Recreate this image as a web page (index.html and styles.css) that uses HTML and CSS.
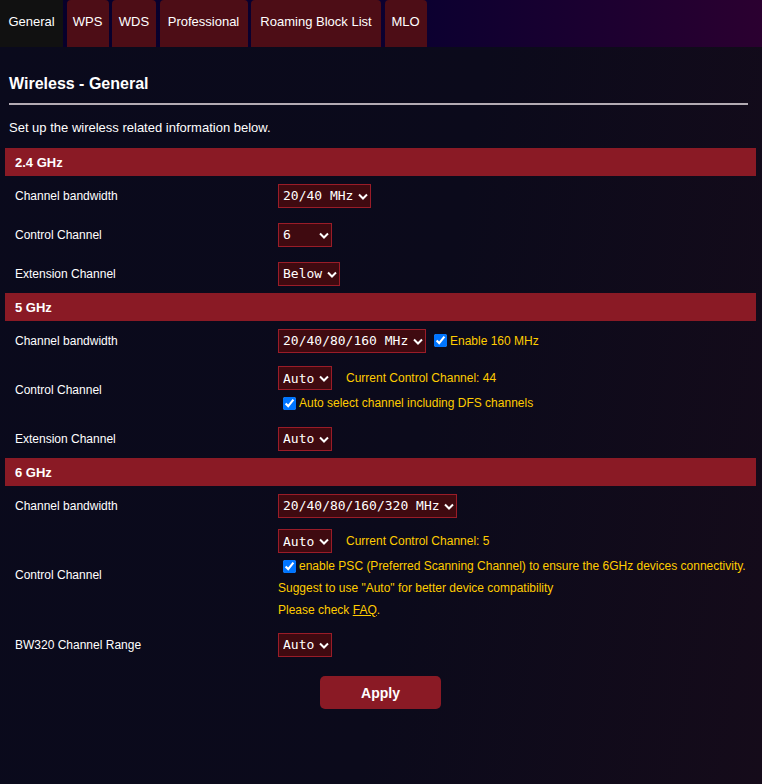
FILE: index.html
```html
<!DOCTYPE html>
<html lang="en">
<head>
    <meta charset="UTF-8">
    <meta name="viewport" content="width=device-width, initial-scale=1.0">
    <title>Wireless - General</title>
    <link rel="stylesheet" href="styles.css">
</head>
<body>
    <nav class="tab-bar">
        <a class="tab active tab-general" href="#">General</a>
        <a class="tab tab-wps" href="#">WPS</a>
        <a class="tab tab-wds" href="#">WDS</a>
        <a class="tab tab-pro" href="#">Professional</a>
        <a class="tab tab-roam" href="#">Roaming Block List</a>
        <a class="tab tab-mlo" href="#">MLO</a>
    </nav>

    <main class="content">
        <h1 class="page-title">Wireless - General</h1>
        <p class="page-desc">Set up the wireless related information below.</p>

        <section class="band">
            <div class="band-head">2.4 GHz</div>
            <div class="row">
                <div class="row-label">Channel bandwidth</div>
                <div class="row-field">
                    <span class="select-wrap">
                        <select><option>20 MHz</option><option selected>20/40 MHz</option><option>40 MHz</option></select>
                        <svg class="chevron" width="10" height="7" viewBox="0 0 10 7"><polyline points="1,1.5 5,5.5 9,1.5"/></svg>
                    </span>
                </div>
            </div>
            <div class="row">
                <div class="row-label">Control Channel</div>
                <div class="row-field">
                    <span class="select-wrap">
                        <select><option>Auto</option><option>1</option><option>2</option><option>3</option><option>4</option><option>5</option><option selected>6</option><option>7</option><option>8</option><option>9</option><option>10</option><option>11</option></select>
                        <svg class="chevron" width="10" height="7" viewBox="0 0 10 7"><polyline points="1,1.5 5,5.5 9,1.5"/></svg>
                    </span>
                </div>
            </div>
            <div class="row">
                <div class="row-label">Extension Channel</div>
                <div class="row-field">
                    <span class="select-wrap">
                        <select><option>Auto</option><option>Above</option><option selected>Below</option></select>
                        <svg class="chevron" width="10" height="7" viewBox="0 0 10 7"><polyline points="1,1.5 5,5.5 9,1.5"/></svg>
                    </span>
                </div>
            </div>
        </section>

        <section class="band">
            <div class="band-head">5 GHz</div>
            <div class="row">
                <div class="row-label">Channel bandwidth</div>
                <div class="row-field">
                    <span class="select-wrap">
                        <select><option selected>20/40/80/160 MHz</option><option>20 MHz</option></select>
                        <svg class="chevron" width="10" height="7" viewBox="0 0 10 7"><polyline points="1,1.5 5,5.5 9,1.5"/></svg>
                    </span>
                    <label class="check check-inline"><input type="checkbox" checked>Enable 160 MHz</label>
                </div>
            </div>
            <div class="row">
                <div class="row-label">Control Channel</div>
                <div class="row-field stacked short">
                    <div class="line">
                        <span class="select-wrap">
                            <select><option selected>Auto</option><option>36</option></select>
                            <svg class="chevron" width="10" height="7" viewBox="0 0 10 7"><polyline points="1,1.5 5,5.5 9,1.5"/></svg>
                        </span>
                        <span class="hint">Current Control Channel: 44</span>
                    </div>
                    <label class="check"><input type="checkbox" checked>Auto select channel including DFS channels</label>
                </div>
            </div>
            <div class="row">
                <div class="row-label">Extension Channel</div>
                <div class="row-field">
                    <span class="select-wrap">
                        <select><option selected>Auto</option></select>
                        <svg class="chevron" width="10" height="7" viewBox="0 0 10 7"><polyline points="1,1.5 5,5.5 9,1.5"/></svg>
                    </span>
                </div>
            </div>
        </section>

        <section class="band">
            <div class="band-head">6 GHz</div>
            <div class="row">
                <div class="row-label">Channel bandwidth</div>
                <div class="row-field">
                    <span class="select-wrap">
                        <select><option selected>20/40/80/160/320 MHz</option><option>20 MHz</option></select>
                        <svg class="chevron" width="10" height="7" viewBox="0 0 10 7"><polyline points="1,1.5 5,5.5 9,1.5"/></svg>
                    </span>
                </div>
            </div>
            <div class="row">
                <div class="row-label">Control Channel</div>
                <div class="row-field stacked">
                    <div class="line">
                        <span class="select-wrap">
                            <select><option selected>Auto</option><option>5</option></select>
                            <svg class="chevron" width="10" height="7" viewBox="0 0 10 7"><polyline points="1,1.5 5,5.5 9,1.5"/></svg>
                        </span>
                        <span class="hint">Current Control Channel: 5</span>
                    </div>
                    <label class="check"><input type="checkbox" checked>enable PSC (Preferred Scanning Channel) to ensure the 6GHz devices connectivity.</label>
                    <div class="note">Suggest to use "Auto" for better device compatibility</div>
                    <div class="note">Please check <a href="#">FAQ</a>.</div>
                </div>
            </div>
            <div class="row">
                <div class="row-label">BW320 Channel Range</div>
                <div class="row-field">
                    <span class="select-wrap">
                        <select><option selected>Auto</option></select>
                        <svg class="chevron" width="10" height="7" viewBox="0 0 10 7"><polyline points="1,1.5 5,5.5 9,1.5"/></svg>
                    </span>
                </div>
            </div>
        </section>

        <div class="actions">
            <button type="button" class="apply-btn">Apply</button>
        </div>
    </main>
</body>
</html>
```

FILE: styles.css
```css
body {
    margin: 0;
    min-height: 784px;
    font-family: "Liberation Sans", Arial, sans-serif;
    color: #fff;
    background: linear-gradient(100deg, #0a0a1c 0%, #0b0a1b 55%, #150b1a 100%);
}
.tab-bar {
    display: flex;
    gap: 3.5px;
    height: 47px;
    background: linear-gradient(90deg, #06002a 0%, #0c0030 56%, #2b0030 100%);
}
.tab {
    display: flex;
    align-items: center;
    justify-content: center;
    padding-bottom: 4px;
    font-size: 13px;
    color: #fff;
    text-decoration: none;
    white-space: nowrap;
    background-color: #4d0d16;
    border-radius: 4px 4px 0 0;
}
.tab.active {
    background-color: #111;
    border-radius: 0;
}
.tab-general { width: 63px; }
.tab-wps { width: 42px; }
.tab-wds { width: 44px; }
.tab-pro { width: 88px; }
.tab-roam { width: 130px; }
.tab-mlo { width: 42px; }
.content {
    padding: 0 6px 40px 5px;
}
.page-title {
    margin: 27px 8px 0 4px;
    padding-bottom: 10px;
    font-size: 16px;
    line-height: 19px;
    border-bottom: 2px solid #b3abb3;
}
.page-desc {
    margin: 15px 0 13px 4px;
    font-size: 13px;
    line-height: 15px;
}
.band-head {
    height: 28px;
    padding-left: 10px;
    display: flex;
    align-items: center;
    font-size: 13px;
    font-weight: bold;
    background-color: #8a1a25;
}
.row {
    display: flex;
    align-items: center;
    min-height: 39px;
}
.row-label {
    width: 263px;
    padding-left: 10px;
    font-size: 12px;
}
.row-field {
    display: flex;
    align-items: center;
    font-size: 12px;
    color: #ffcc00;
}
.row-field.stacked {
    flex-direction: column;
    align-items: flex-start;
    padding: 4px 0 4px;
}
.row-field.stacked.short {
    padding: 6px 0 5px;
}
.line {
    display: flex;
    align-items: center;
    margin-bottom: 2px;
}
.select-wrap {
    position: relative;
    display: inline-flex;
}
select {
    appearance: none;
    -webkit-appearance: none;
    height: 24px;
    margin: 0;
    padding: 0 16px 0 4px;
    font-family: "DejaVu Sans Mono", monospace;
    font-size: 13px;
    color: #fff;
    background-color: #3f0a10;
    border: 1px solid #9a1c28;
    border-radius: 0;
    outline: none;
}
.chevron {
    position: absolute;
    right: 3px;
    top: 9px;
    pointer-events: none;
}
.chevron polyline {
    fill: none;
    stroke: #fff;
    stroke-width: 2;
}
.hint {
    margin-left: 14px;
}
.check {
    display: flex;
    align-items: center;
    height: 22px;
}
.check input {
    width: 13px;
    height: 13px;
    margin: 0 3px 0 5px;
}
.check-inline input {
    margin-left: 8px;
}
.note {
    line-height: 22px;
}
.note a {
    color: #ffcc00;
}
.actions {
    display: flex;
    justify-content: center;
    margin-top: 12px;
}
.apply-btn {
    width: 121px;
    height: 33px;
    font-family: "Liberation Sans", Arial, sans-serif;
    font-size: 14px;
    font-weight: bold;
    color: #fff;
    background-color: #8a1a25;
    border: none;
    border-radius: 5px;
    cursor: pointer;
}
.apply-btn:hover {
    background-color: #a0212d;
}
```
